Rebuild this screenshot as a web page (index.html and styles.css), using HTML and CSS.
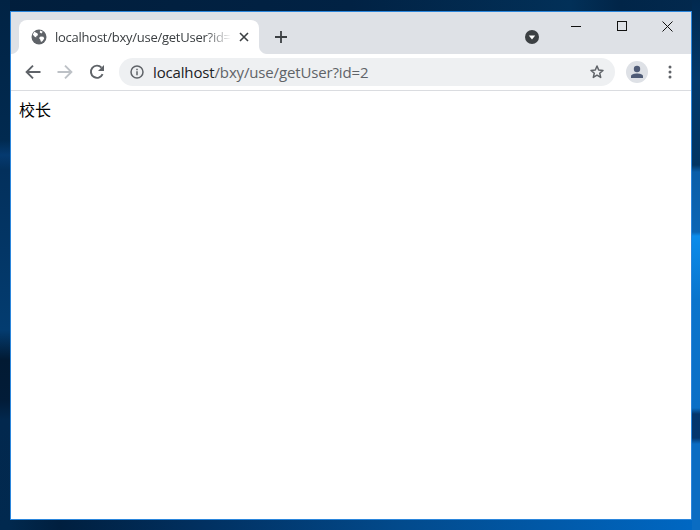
FILE: index.html
```html
<!DOCTYPE html>
<html lang="zh">
<head>
<meta charset="utf-8">
<title>localhost/bxy/use/getUser?id=2</title>
<link rel="stylesheet" href="styles.css">
</head>
<body>
<div class="window">
  <div class="tabstrip">
    <div class="tab">
      <svg class="globe" width="16" height="16" viewBox="0 0 16 16"><circle cx="8" cy="8" r="7.5" fill="#5f6368"/><path d="M3.4 2.8 6.6 4.4 7 6.2 5.4 7 5.2 8.4 3.4 7.6 1.8 5.6ZM9 1.6 11.8 2.8 10.4 4.4 8.8 3.4ZM9.6 7.6 12.4 7.8 13.2 9.6 11.6 12 10 13 9.2 10.4 8 9Z" fill="#fff"/></svg>
      <span class="tab-title">localhost/bxy/use/getUser?id=</span>
      <svg class="tab-close" width="10" height="10" viewBox="0 0 10 10"><path d="M1 1 9 9M9 1 1 9" stroke="#3c4043" stroke-width="1.6" fill="none"/></svg>
    </div>
    <div class="newtab">
      <svg width="12" height="12" viewBox="0 0 12 12"><path d="M6 0V12M0 6H12" stroke="#3c4043" stroke-width="1.8" fill="none"/></svg>
    </div>
    <div class="strip-space"></div>
    <div class="tabsearch">
      <svg width="14" height="14" viewBox="0 0 14 14"><circle cx="7" cy="7" r="7" fill="#3c4043"/><path d="M3.8 5.6H10.2L7 9.4Z" fill="#fff"/></svg>
    </div>
    <div class="controls">
      <div class="ctl"><svg width="10" height="10" viewBox="0 0 10 10"><path d="M0 5.5H10" stroke="#111" fill="none"/></svg></div>
      <div class="ctl"><svg width="10" height="10" viewBox="0 0 10 10"><rect x=".5" y=".5" width="9" height="9" stroke="#111" fill="none"/></svg></div>
      <div class="ctl ctl-close"><svg width="11" height="11" viewBox="0 0 11 11"><path d="M.5.5 10.5 10.5M10.5.5.5 10.5" stroke="#111" stroke-width="1" fill="none"/></svg></div>
    </div>
  </div>
  <div class="toolbar">
    <div class="btn"><svg width="16" height="16" viewBox="0 0 16 16"><path d="M15.5 8H1.8M8 1.6 1.6 8 8 14.4" stroke="#5f6368" stroke-width="1.9" fill="none"/></svg></div>
    <div class="btn"><svg width="16" height="16" viewBox="0 0 16 16"><path d="M.5 8H14.2M8 1.6 14.4 8 8 14.4" stroke="#bdc1c6" stroke-width="1.9" fill="none"/></svg></div>
    <div class="btn"><svg width="16" height="16" viewBox="0 0 16 16"><path d="M13.6 10.2A6.1 6.1 0 1 1 12.5 3.6" stroke="#5f6368" stroke-width="1.9" fill="none"/><path d="M15 1V7H9Z" fill="#5f6368"/></svg></div>
    <div class="omnibox">
      <svg class="info" width="14" height="14" viewBox="0 0 14 14"><circle cx="7" cy="7" r="6" stroke="#5f6368" stroke-width="1.5" fill="none"/><path d="M7 6.2V10.2M7 3.8V5.3" stroke="#5f6368" stroke-width="1.5" fill="none"/></svg>
      <span class="url"><span class="host">localhost</span>/bxy/use/getUser?id=2</span>
      <svg class="star" width="16" height="16" viewBox="0 0 16 16"><path d="M8 2 9.7 6 14 6.4 10.7 9.2 11.7 13.4 8 11.2 4.3 13.4 5.3 9.2 2 6.4 6.3 6Z" stroke="#5f6368" stroke-width="1.5" stroke-linejoin="round" fill="none"/></svg>
    </div>
    <div class="btn avatar-btn">
      <div class="avatar"><svg width="14" height="14" viewBox="0 0 14 14"><circle cx="7" cy="4" r="3.2" fill="#4f5b76"/><path d="M1 13V11.2C1 9.2 4.4 8.4 7 8.4S13 9.2 13 11.2V13Z" fill="#4f5b76"/></svg></div>
    </div>
    <div class="btn"><svg width="4" height="14" viewBox="0 0 4 14"><circle cx="2" cy="2" r="1.5" fill="#5f6368"/><circle cx="2" cy="7" r="1.5" fill="#5f6368"/><circle cx="2" cy="12" r="1.5" fill="#5f6368"/></svg></div>
  </div>
  <div class="page">校长</div>
</div>
</body>
</html>
```
FILE: styles.css
```css
* { box-sizing: border-box; }
html, body { margin: 0; height: 100%; }
body {
  overflow: hidden;
  padding: 11px 8px 10px 10px;
  background-color: #012548;
  background-repeat: no-repeat;
  background-image:
    linear-gradient(180deg, #01294f 0, #02386a 80px, #023562 165px, #0a5ea8 172px, #0a65b4 232px, #0b8ceb 236px, #0a74cc 300px, #0a6fc6 408px, #04366c 414px, #04376e 438px, #0a6cc2 444px, #0a6cc2 530px),
    linear-gradient(180deg, #012344 0, #012a50 140px, #053a70 155px, #03305c 170px, #033c70 330px, #021a33 360px, #021c38 400px, #02284e 420px, #01294f 530px),
    linear-gradient(90deg, #011e3c 0, #012244 350px, #023058 570px, #012548 620px, #02294e 700px),
    linear-gradient(90deg, #012a50 0, #001f3f 60px, #013060 200px, #024a8c 400px, #0068c4 700px);
  background-size: 8px 100%, 10px 100%, 100% 11px, 100% 10px;
  background-position: right top, left top, left top, left bottom;
}
.window {
  height: 100%;
  display: flex;
  flex-direction: column;
  border: 1px solid #2b86dc;
  background: #fff;
}
.tabstrip {
  height: 42px;
  flex: none;
  display: flex;
  align-items: flex-start;
  padding: 8px 0 0 8px;
  background: #dee1e6;
}
.tab {
  position: relative;
  width: 240px;
  height: 34px;
  flex: none;
  display: flex;
  align-items: center;
  padding: 0 12px 0 12px;
  background: #fff;
  border-radius: 8px 8px 0 0;
}
.tab::before, .tab::after {
  content: "";
  position: absolute;
  bottom: 0;
  width: 8px;
  height: 8px;
}
.tab::before {
  left: -8px;
  background: radial-gradient(circle at 0 0, #dee1e6 7.5px, #fff 8.5px);
}
.tab::after {
  right: -8px;
  background: radial-gradient(circle at 100% 0, #dee1e6 7.5px, #fff 8.5px);
}
.globe { flex: none; }
.tab-title {
  flex: 1;
  margin: 0 8px;
  white-space: nowrap;
  font: 13px/16px "Open Sans", sans-serif;
  letter-spacing: -0.25px;
  color: #3c4043;
  -webkit-mask-image: linear-gradient(90deg, #000 150px, transparent 176px);
  mask-image: linear-gradient(90deg, #000 150px, transparent 176px);
}
.tab-close { flex: none; }
.newtab {
  width: 28px;
  height: 34px;
  margin-left: 8px;
  display: flex;
  align-items: center;
  justify-content: center;
}
.strip-space { flex: 1; }
.tabsearch {
  width: 14px;
  height: 34px;
  margin-right: 14px;
  display: flex;
  align-items: center;
}
.controls {
  display: flex;
  margin-top: -8px;
}
.ctl {
  width: 46px;
  height: 28px;
  display: flex;
  align-items: center;
  justify-content: center;
}
.ctl-close { padding-right: 1px; }
.toolbar {
  height: 37px;
  flex: none;
  display: flex;
  align-items: center;
  padding: 0 5px 1px 6px;
  background: #fff;
  border-bottom: 1px solid #dadce0;
}
.btn {
  width: 32px;
  height: 32px;
  flex: none;
  display: flex;
  align-items: center;
  justify-content: center;
}
.omnibox {
  flex: 1;
  height: 28px;
  margin: 0 6px;
  display: flex;
  align-items: center;
  padding: 0 10px 0 11px;
  border-radius: 14px;
  background: #eef0f2;
}
.info { flex: none; }
.url {
  flex: 1;
  margin-left: 9px;
  font: 15px/20px "Open Sans", sans-serif;
  letter-spacing: -0.15px;
  color: #5f6368;
  white-space: nowrap;
}
.host { color: #202124; }
.star { flex: none; }
.avatar-btn { margin-right: 1px; }
.avatar {
  width: 22px;
  height: 22px;
  display: flex;
  align-items: center;
  justify-content: center;
  border-radius: 50%;
  background: #dee1e6;
}
.page {
  flex: 1;
  padding: 8px;
  font: 400 16px/20px "Noto Sans CJK SC", sans-serif;
  color: #000;
}
```
